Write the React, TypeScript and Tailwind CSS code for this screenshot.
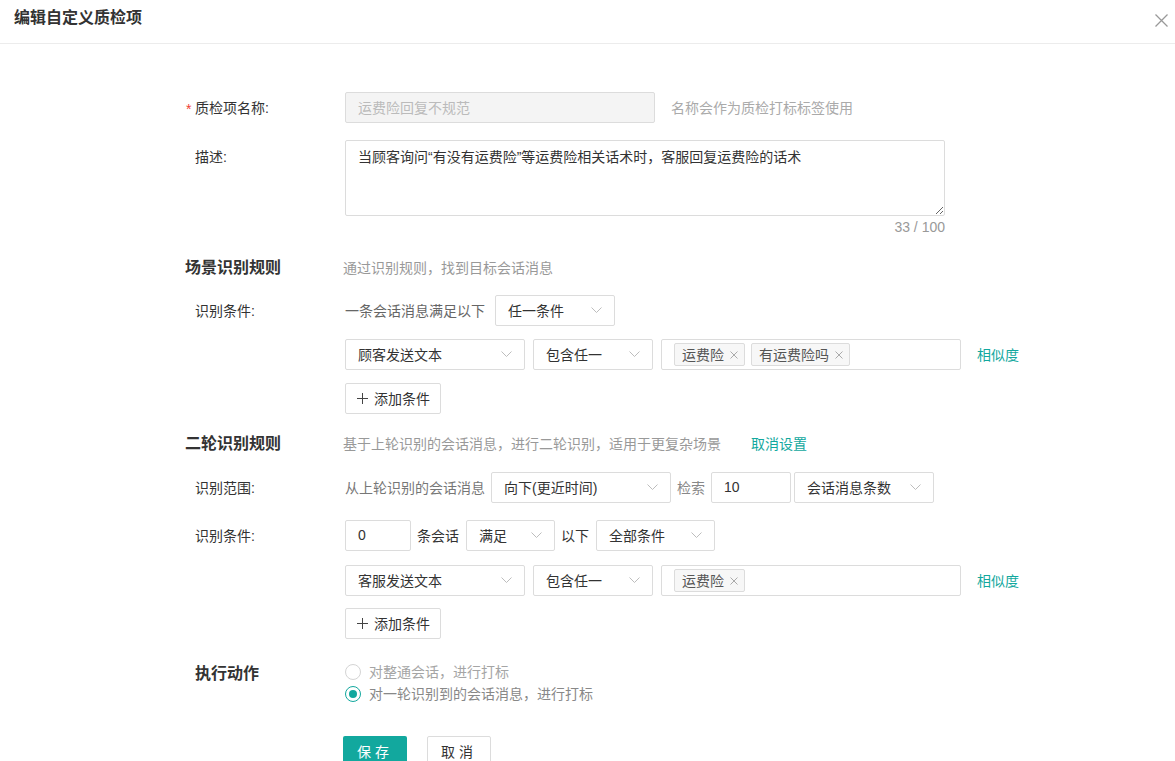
import React from "react";

const TEAL = "text-[#12a89e]";

function Chevron() {
  return (
    <svg width="11" height="7" viewBox="0 0 11 7" className="shrink-0">
      <polyline points="0.5,0.5 5.5,5.5 10.5,0.5" fill="none" stroke="#bdbdbd" strokeWidth="1" />
    </svg>
  );
}

function Select({ text, className }: { text: string; className: string }) {
  return (
    <div
      className={`flex h-[31px] shrink-0 items-center justify-between rounded-[2px] border border-[#dcdcdc] bg-white pl-[12px] pr-[12px] text-[#333] ${className}`}
    >
      <span className="leading-[20px]">{text}</span>
      <Chevron />
    </div>
  );
}

function Input({ value, className }: { value: string; className: string }) {
  return (
    <div
      className={`flex h-[31px] shrink-0 items-center rounded-[2px] border border-[#dcdcdc] bg-white pl-[12px] text-[14px] text-[#333] ${className}`}
    >
      {value}
    </div>
  );
}

function Tag({ text }: { text: string }) {
  return (
    <span className="flex h-[23px] items-center gap-[6px] rounded-[2px] border border-[#dcdcdc] bg-[#f7f7f7] pl-[7px] pr-[6px] text-[#555]">
      <span className="leading-[20px]">{text}</span>
      <svg width="8" height="8" viewBox="0 0 8 8">
        <path d="M0.5 0.5 L7.5 7.5 M7.5 0.5 L0.5 7.5" stroke="#aaa" strokeWidth="1" />
      </svg>
    </span>
  );
}

function ConditionRow({ who, tags }: { who: string; tags: string[] }) {
  return (
    <div className="flex items-center">
      <Select text={who} className="w-[180px]" />
      <Select text="包含任一" className="ml-[8px] w-[120px]" />
      <div className="ml-[8px] flex h-[31px] w-[300px] items-center gap-[6px] rounded-[2px] border border-[#dcdcdc] pl-[12px]">
        {tags.map((t) => (
          <Tag key={t} text={t} />
        ))}
      </div>
      <span className={`ml-[16px] leading-[20px] ${TEAL}`}>相似度</span>
    </div>
  );
}

function AddButton() {
  return (
    <div className="flex h-[31px] w-[96px] items-center rounded-[2px] border border-[#dcdcdc] pl-[11px] text-[#333]">
      <svg width="11" height="11" viewBox="0 0 11 11">
        <path d="M5.5 0 V11 M0 5.5 H11" stroke="#444" strokeWidth="1" />
      </svg>
      <span className="ml-[6px] leading-[20px]">添加条件</span>
    </div>
  );
}

function Row({
  label,
  required,
  className = "",
  children,
}: {
  label?: string;
  required?: boolean;
  className?: string;
  children: React.ReactNode;
}) {
  return (
    <div className={`flex items-center ${className}`}>
      <div className="relative w-[160px] shrink-0 pl-[10px] leading-[20px] text-[#333]">
        {required && <span className="absolute left-[1px] top-[1px] text-[#f04134]">*</span>}
        {label}
      </div>
      <div className="flex items-center">{children}</div>
    </div>
  );
}

function SectionTitle({ title, sub, link }: { title: string; sub: string; link?: string }) {
  return (
    <div className="flex items-center">
      <div className="w-[158px] shrink-0 text-[16px] font-bold leading-[24px] text-[#333]">{title}</div>
      <span className="leading-[20px] text-[#999]">{sub}</span>
      {link && <span className={`ml-[30px] leading-[20px] ${TEAL}`}>{link}</span>}
    </div>
  );
}

function Radio({ checked, text }: { checked?: boolean; text: string }) {
  return (
    <div className="flex h-[22px] items-center">
      {checked ? (
        <span className="flex h-[16px] w-[16px] items-center justify-center rounded-full border-[1.5px] border-[#12a89e]">
          <span className="h-[8px] w-[8px] rounded-full bg-[#12a89e]" />
        </span>
      ) : (
        <span className="h-[16px] w-[16px] rounded-full border border-[#d4d4d4]" />
      )}
      <span className={`ml-[8px] leading-[20px] ${checked ? "text-[#888]" : "text-[#a5a5a5]"}`}>{text}</span>
    </div>
  );
}

export default function App() {
  return (
    <div className="relative h-[761px] w-[1175px] overflow-hidden bg-white font-['Liberation_Sans','Noto_Sans_CJK_SC',sans-serif] text-[14px]">
      <header className="flex h-[44px] items-start justify-between border-b border-[#ececec] pl-[14px] pr-[7px] pt-[8px]">
        <h1 className="text-[16px] font-bold leading-[20px] text-[#333]">编辑自定义质检项</h1>
        <svg width="13" height="13" viewBox="0 0 13 13" className="mt-[6px]">
          <path d="M0.5 0.5 L12.5 12.5 M12.5 0.5 L0.5 12.5" stroke="#999" strokeWidth="1.3" />
        </svg>
      </header>

      <div className="ml-[185px] flex flex-col">
        <Row label="质检项名称:" required className="mt-[48px]">
          <div className="flex h-[31px] w-[310px] items-center rounded-[2px] border border-[#dcdcdc] bg-[#f4f4f4] pl-[12px] leading-[20px] text-[#bbb]">
            运费险回复不规范
          </div>
          <span className="ml-[16px] leading-[20px] text-[#aaa]">名称会作为质检打标标签使用</span>
        </Row>

        <div className="mt-[17px] flex items-start">
          <div className="w-[160px] shrink-0 pl-[10px] pt-[7px] leading-[20px] text-[#333]">描述:</div>
          <div className="flex flex-col">
            <textarea
              className="h-[76px] w-[600px] rounded-[2px] border border-[#dcdcdc] px-[12px] py-[6px] leading-[20px] text-[#333] outline-none"
              defaultValue="当顾客询问“有没有运费险”等运费险相关话术时，客服回复运费险的话术"
            />
            <div className="mt-[1px] text-right leading-[20px] text-[#999]">33 / 100</div>
          </div>
        </div>

        <div className="mt-[19px]">
          <SectionTitle title="场景识别规则" sub="通过识别规则，找到目标会话消息" />
        </div>

        <Row label="识别条件:" className="mt-[15px]">
          <span className="leading-[20px] text-[#666]">一条会话消息满足以下</span>
          <Select text="任一条件" className="ml-[10px] w-[120px]" />
        </Row>

        <div className="mt-[13px] pl-[160px]">
          <ConditionRow who="顾客发送文本" tags={["运费险", "有运费险吗"]} />
        </div>
        <div className="mt-[13px] pl-[160px]">
          <AddButton />
        </div>

        <div className="mt-[18px]">
          <SectionTitle
            title="二轮识别规则"
            sub="基于上轮识别的会话消息，进行二轮识别，适用于更复杂场景"
            link="取消设置"
          />
        </div>

        <Row label="识别范围:" className="mt-[16px]">
          <span className="leading-[20px] text-[#777]">从上轮识别的会话消息</span>
          <Select text="向下(更近时间)" className="ml-[6px] w-[180px]" />
          <span className="ml-[6px] leading-[20px] text-[#888]">检索</span>
          <Input value="10" className="ml-[6px] w-[80px]" />
          <Select text="会话消息条数" className="ml-[3px] w-[140px]" />
        </Row>

        <Row label="识别条件:" className="mt-[17px]">
          <Input value="0" className="w-[66px]" />
          <span className="ml-[6px] leading-[20px] text-[#333]">条会话</span>
          <Select text="满足" className="ml-[7px] w-[89px]" />
          <span className="ml-[6px] leading-[20px] text-[#333]">以下</span>
          <Select text="全部条件" className="ml-[7px] w-[119px]" />
        </Row>

        <div className="mt-[14px] pl-[160px]">
          <ConditionRow who="客服发送文本" tags={["运费险"]} />
        </div>
        <div className="mt-[12px] pl-[160px]">
          <AddButton />
        </div>

        <div className="mt-[22px] flex items-start">
          <div className="w-[160px] shrink-0 pl-[10px] pt-[1px] text-[16px] font-bold leading-[24px] text-[#333]">执行动作</div>
          <div className="flex flex-col">
            <Radio text="对整通会话，进行打标" />
            <Radio checked text="对一轮识别到的会话消息，进行打标" />
          </div>
        </div>

        <div className="mt-[31px] flex gap-[20px] pl-[158px]">
          <button className="h-[32px] w-[64px] rounded-[2px] bg-[#12a89e] tracking-[4px] text-white">保存</button>
          <button className="h-[32px] w-[64px] rounded-[2px] border border-[#dcdcdc] bg-white tracking-[4px] text-[#333]">
            取消
          </button>
        </div>
      </div>
    </div>
  );
}
